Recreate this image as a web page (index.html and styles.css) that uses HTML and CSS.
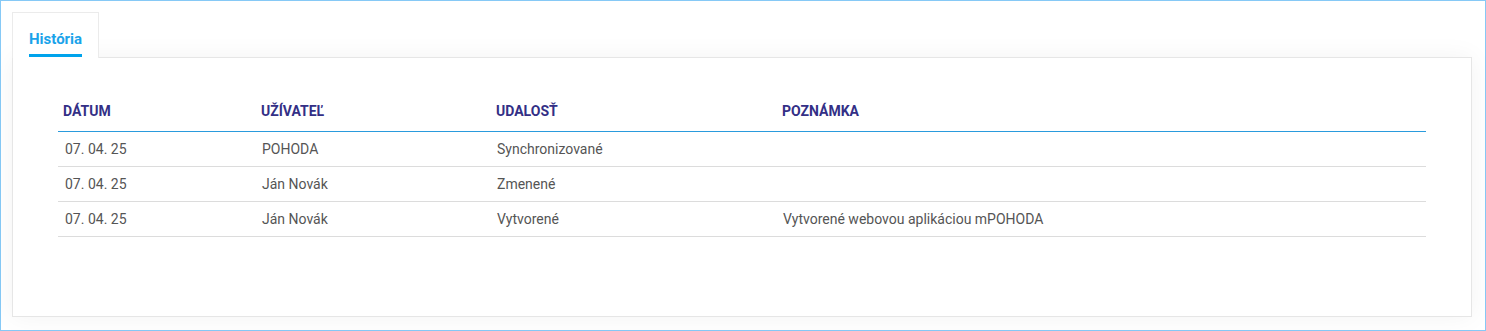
FILE: index.html
```html
<!DOCTYPE html>
<html lang="sk">
<head>
<meta charset="utf-8">
<title>História</title>
<link rel="stylesheet" href="styles.css">
</head>
<body>
<div class="frame">
  <div class="tabs">
    <div class="tab active"><span class="tab-label">História</span></div>
  </div>
  <div class="panel">
    <div class="table">
      <div class="row head">
        <div class="cell">DÁTUM</div>
        <div class="cell">UŽÍVATEĽ</div>
        <div class="cell">UDALOSŤ</div>
        <div class="cell">POZNÁMKA</div>
      </div>
      <div class="row">
        <div class="cell">07. 04. 25</div>
        <div class="cell">POHODA</div>
        <div class="cell">Synchronizované</div>
        <div class="cell"></div>
      </div>
      <div class="row">
        <div class="cell">07. 04. 25</div>
        <div class="cell">Ján Novák</div>
        <div class="cell">Zmenené</div>
        <div class="cell"></div>
      </div>
      <div class="row">
        <div class="cell">07. 04. 25</div>
        <div class="cell">Ján Novák</div>
        <div class="cell">Vytvorené</div>
        <div class="cell">Vytvorené webovou aplikáciou mPOHODA</div>
      </div>
    </div>
  </div>
</div>
</body>
</html>
```

FILE: styles.css
```css
* { box-sizing: border-box; }
html, body { margin: 0; padding: 0; background: #fff; }
body { font-family: Roboto, "Liberation Sans", Arial, sans-serif; }

.frame {
  width: 1486px;
  height: 331px;
  border: 1px solid #86c9f6;
  padding: 11px 13px 13px 11px;
  background: #fff;
  display: flex;
  flex-direction: column;
}

.tabs {
  display: flex;
  position: relative;
  z-index: 2;
}

.tab {
  width: 87px;
  height: 46px;
  margin-bottom: -1px;
  border: 1px solid #ebebeb;
  border-bottom: none;
  background: #fff;
  padding: 16px 0 0 16px;
}

.tab-label {
  display: inline-block;
  font-size: 15px;
  font-weight: 700;
  color: #1aa3ea;
  line-height: 20px;
  padding-bottom: 5px;
  border-bottom: 3px solid #00a3ec;
}

.panel {
  flex: 1;
  border: 1px solid #e6e6e6;
  background: #fff;
  box-shadow: 0 0 24px rgba(0, 0, 0, 0.05);
  padding: 32px 45px 0 45px;
  position: relative;
  z-index: 1;
}

.table {
  display: flex;
  flex-direction: column;
}

.row {
  display: grid;
  grid-template-columns: 197px 235px 286px 1fr;
  height: 35px;
  align-items: center;
  border-bottom: 1px solid #dcdcdc;
  font-size: 14px;
  color: #555;
}

.row .cell { padding-left: 7px; }

.row.head {
  height: 42px;
  border-bottom: 1px solid #2a9bdd;
  font-size: 14px;
  font-weight: 700;
  color: #332f86;
}

.row.head .cell { padding-left: 5px; }
.row.head .cell + .cell { padding-left: 6px; }
```
